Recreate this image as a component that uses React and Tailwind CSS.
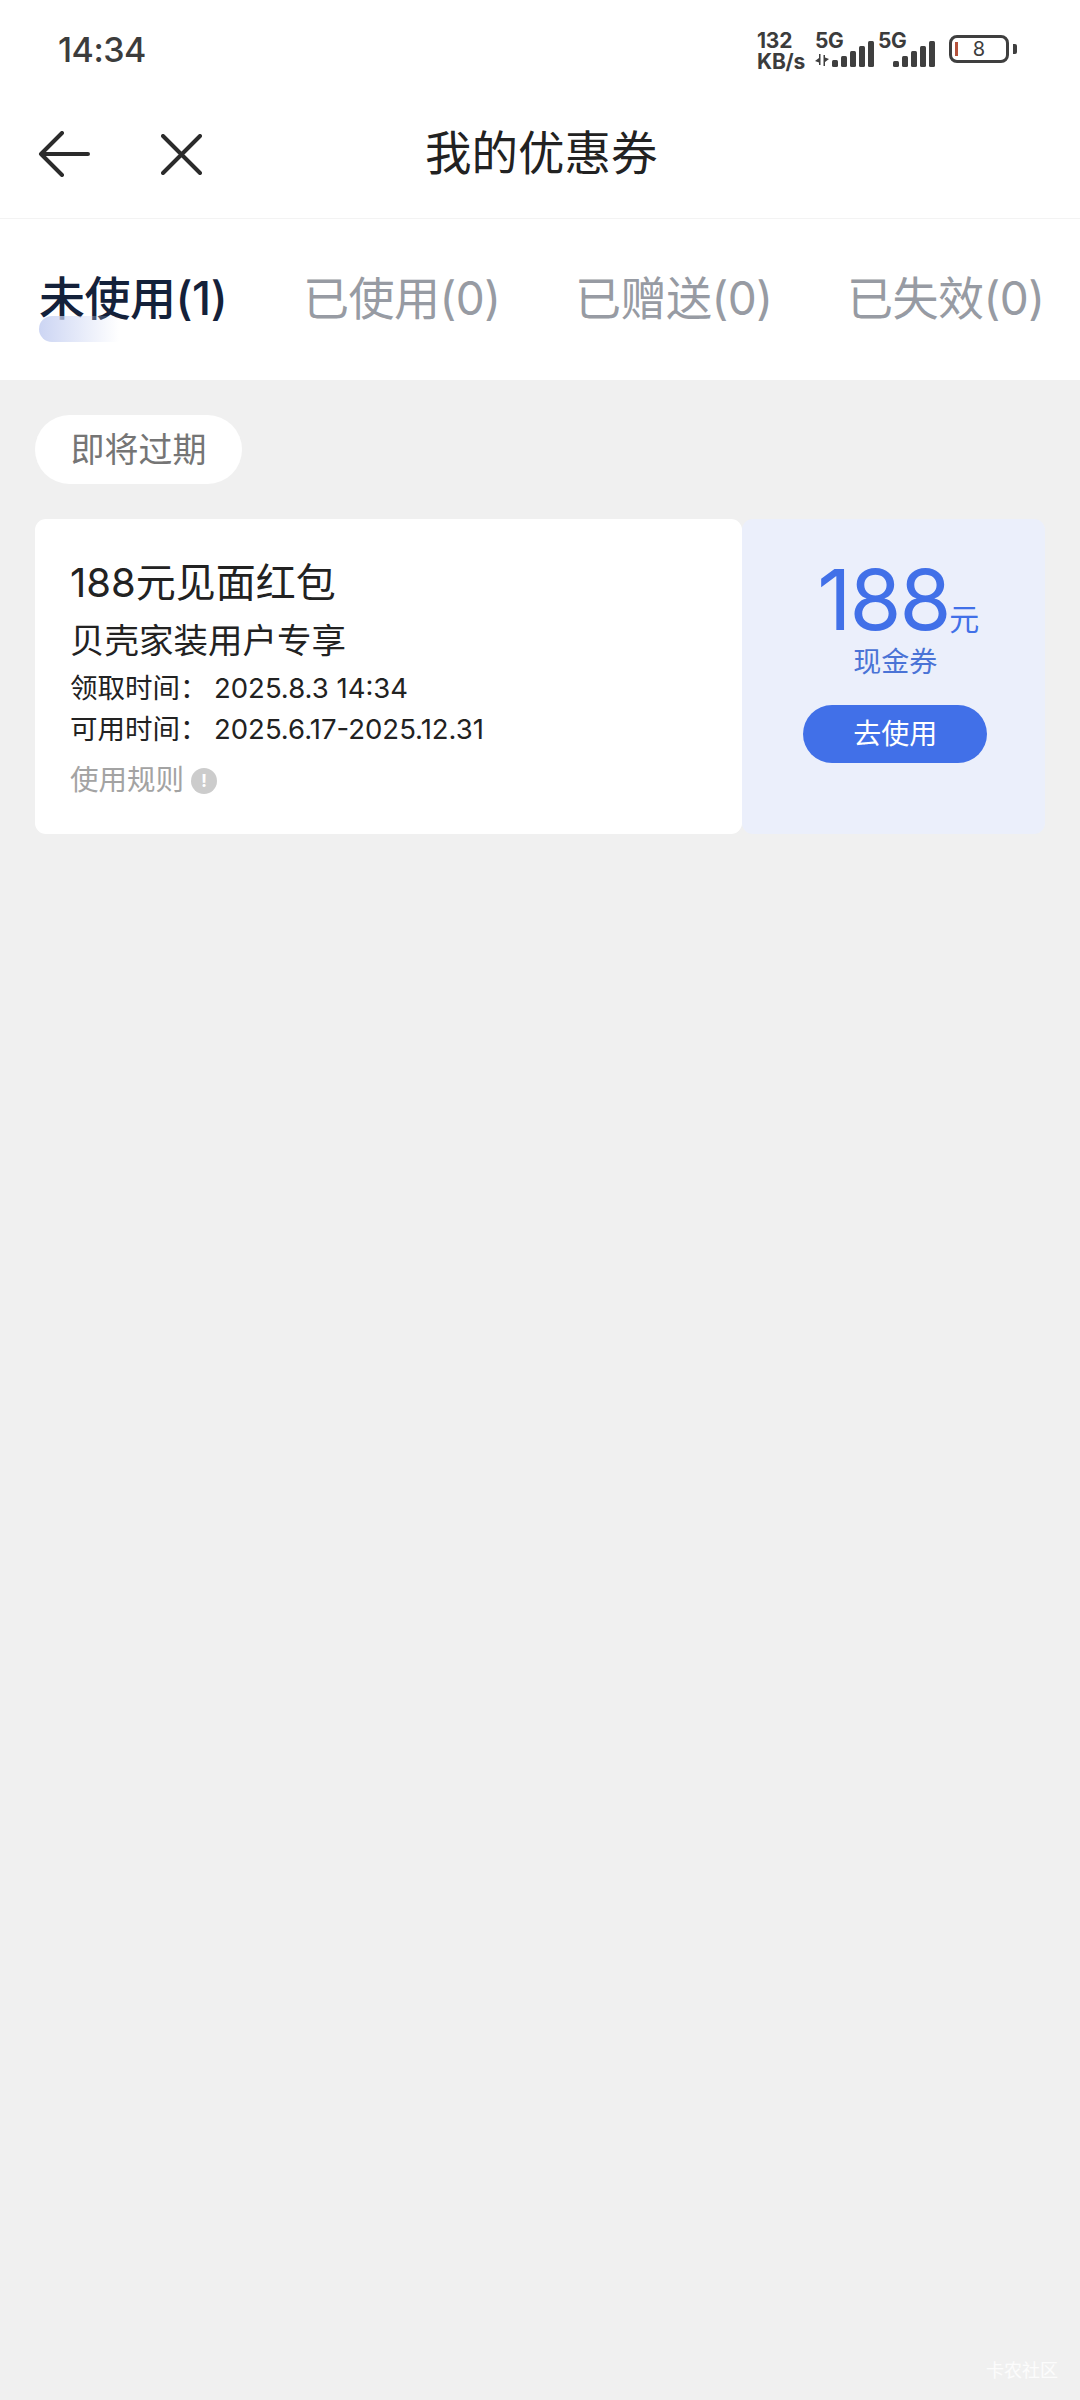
import React from 'react';

const FONT = "font-['Inter','Noto_Sans_CJK_SC',sans-serif]";

const SignalBars = ({ heights }) => (
    <div className="flex items-end gap-[3px] h-[27px]">
        {heights.map((h, i) => (
            <div key={i} className="w-[6px] rounded-[1.5px] bg-[#3f3f3f]" style={{ height: h }} />
        ))}
    </div>
);

const StatusBar = () => (
    <div className="h-[100px] flex items-start justify-between pl-[58px] pr-[63px] text-[#3c3c3c]">
        <div className="mt-[28px] text-[34px] leading-[44px] font-medium tracking-[-0.5px]">14:34</div>
        <div className="mt-[30px] flex items-start">
            <div className="text-[21px] leading-[21px] font-bold w-[54px] ml-[2px] tracking-[-0.2px] whitespace-nowrap">
                <div>132</div>
                <div>KB/s</div>
            </div>
            <div className="relative w-[59px] h-[37px] ml-[4px]">
                <span className="absolute left-0 top-0 text-[21px] leading-[21px] font-bold tracking-[-0.5px]">5G</span>
                {/* data arrows */}
                <svg className="absolute left-0 bottom-[0px]" width="14" height="14" viewBox="0 0 14 14" fill="#3f3f3f">
                    <path d="M0 8 L4 5 L4 1 L5.5 1 L5.5 12 L4 12 L4 9.5 Z" />
                    <path d="M14 6 L10 9 L10 13 L8.5 13 L8.5 2 L10 2 L10 4.5 Z" />
                </svg>
                <div className="absolute right-0 bottom-0">
                    <SignalBars heights={[7, 11, 16, 21, 26]} />
                </div>
            </div>
            <div className="relative w-[57px] h-[37px] ml-[4px]">
                <span className="absolute left-0 top-0 text-[21px] leading-[21px] font-bold tracking-[-0.5px]">5G</span>
                <div className="absolute right-0 bottom-0">
                    <SignalBars heights={[6, 11, 16, 21, 26]} />
                </div>
            </div>
            <div className="ml-[14px] mt-[5px] flex items-center">
                <div className="relative w-[60px] h-[28px] rounded-[8px] border-[3px] border-[#3f3f3f] flex items-center justify-center">
                    <div className="absolute left-[3px] top-[4px] w-[3px] h-[14px] bg-[#b5523c]" />
                    <span className="text-[20px] leading-none">8</span>
                </div>
                <div className="ml-[4px] w-[4px] h-[10px] rounded-r-[2px] bg-[#3f3f3f]" />
            </div>
        </div>
    </div>
);

const NavBar = () => (
    <div className="relative h-[119px] pb-[10px] flex items-center border-b border-[#f3f3f3] pl-[38px]">
        <svg width="52" height="46" viewBox="0 0 52 46" fill="none" stroke="#2b2b2b" strokeWidth="4" strokeLinecap="round" strokeLinejoin="round">
            <path d="M50 23 H3 M24 2 L3 23 L24 44" />
        </svg>
        <svg className="ml-[71px]" width="41" height="41" viewBox="0 0 41 41" fill="none" stroke="#2b2b2b" strokeWidth="4" strokeLinecap="round">
            <path d="M2 2 L39 39 M39 2 L2 39" />
        </svg>
        <div className="absolute left-[425px] top-[30px] text-[46.5px] leading-[46px] text-[#222222]">我的优惠券</div>
    </div>
);

const Tab = ({ label, active, className }) => (
    <div className={`relative text-[46px] leading-[60px] tracking-[-0.5px] whitespace-nowrap ${active ? 'text-[#14213a] font-medium' : 'text-[#979ba3]'} ${className}`}>
        {label}
        {active && (
            <div className="absolute left-0 top-[48px] w-[80px] h-[26px] rounded-l-full bg-gradient-to-r from-[#ccd5f3] to-transparent" />
        )}
    </div>
);

const Tabs = () => (
    <div className="h-[161px] flex items-start pt-[49px] bg-white">
        <Tab label="未使用(1)" active className="ml-[39px] w-[264px]" />
        <Tab label="已使用(0)" className="w-[272px]" />
        <Tab label="已赠送(0)" className="w-[272px]" />
        <Tab label="已失效(0)" className="w-[200px]" />
    </div>
);

const Coupon = () => (
    <div className="mt-[35px] h-[315px] flex">
        <div className="w-[708px] rounded-[11px] bg-white pl-[35px] pt-[39px]">
            <div className="text-[40px] leading-[50px] text-[#222222]">188元见面红包</div>
            <div className="mt-[11px] text-[34.5px] leading-[44px] text-[#222222]">贝壳家装用户专享</div>
            <div className="mt-[5px] text-[27.5px] leading-[40px] text-[#222222] flex whitespace-nowrap">
                <span className="w-[144px]">领取时间：</span>
                <span>2025.8.3 14:34</span>
            </div>
            <div className="mt-[1px] text-[27.5px] leading-[40px] text-[#222222] flex whitespace-nowrap">
                <span className="w-[144px]">可用时间：</span>
                <span>2025.6.17-2025.12.31</span>
            </div>
            <div className="mt-[11px] flex items-center text-[28.5px] leading-[40px] text-[#a3a3a3]">
                使用规则
                <span className="ml-[7px] mt-[2px] w-[26px] h-[26px] rounded-full bg-[#cccccc] text-white text-[18px] font-bold leading-none flex items-center justify-center">!</span>
            </div>
        </div>
        <div className="w-[304px] pl-[4px] rounded-[11px] bg-[#ebeffb] flex flex-col items-center pt-[40px]">
            <div className="flex items-baseline ml-[6px] text-[#4170e8]">
                <span className="text-[84px] leading-[82px] tracking-[-2px]">188</span>
                <span className="text-[30px] leading-[30px]">元</span>
            </div>
            <div className="mt-[3px] text-[28px] leading-[36px] text-[#4a73d6]">现金券</div>
            <button className="mt-[25px] w-[184px] h-[58px] rounded-full bg-[#4170e8] text-white text-[28px]">去使用</button>
        </div>
    </div>
);

const App = () => (
    <div className={`relative w-[1080px] h-[2400px] overflow-hidden flex flex-col bg-white ${FONT}`}>
        <StatusBar />
        <NavBar />
        <Tabs />
        <div className="flex-1 bg-[#f0f0f0] px-[35px] pt-[35px]">
            <div className="w-[207px] h-[69px] rounded-full bg-white flex items-center justify-center text-[34px] text-[#757575]">即将过期</div>
            <Coupon />
        </div>
        {/* watermark */}
        <div className="absolute right-[22px] bottom-[17px] text-[18px] leading-[24px] text-white/80">卡农社区</div>
    </div>
);

export default App;
